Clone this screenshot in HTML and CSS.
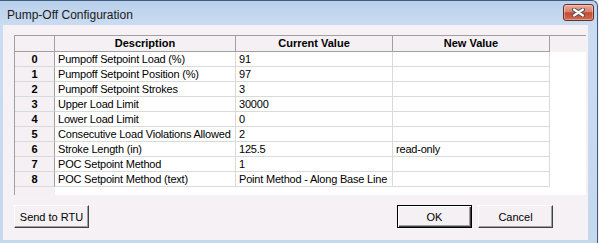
FILE: index.html
```html
<!DOCTYPE html>
<html lang="en">
<head>
    <meta charset="UTF-8">
    <title>Pump-Off Configuration</title>
    <link rel="stylesheet" href="styles.css">
</head>
<body>
    <div class="window">
        <div class="titlebar">
            <span class="title">Pump-Off Configuration</span>
            <button class="close">
                <svg width="13" height="9" viewBox="0 0 13 9">
                    <path d="M2 1.5 L11 7.5 M11 1.5 L2 7.5" stroke="#4b4b4b" stroke-width="4" stroke-linecap="round"/>
                    <path d="M2 1.5 L11 7.5 M11 1.5 L2 7.5" stroke="#fff" stroke-width="2.2" stroke-linecap="round"/>
                </svg>
            </button>
        </div>
        <div class="frame">
            <div class="client">
                <div class="grid">
                    <table>
                        <colgroup>
                            <col style="width: 40px">
                            <col style="width: 181px">
                            <col style="width: 157px">
                            <col style="width: 157px">
                            <col style="width: 36px">
                        </colgroup>
                        <thead>
                            <tr>
                                <th></th>
                                <th>Description</th>
                                <th>Current Value</th>
                                <th>New Value</th>
                                <th class="filler"></th>
                            </tr>
                        </thead>
                        <tbody>
                            <tr><td class="num">0</td><td>Pumpoff Setpoint Load (%)</td><td>91</td><td></td><td class="filler"></td></tr>
                            <tr><td class="num">1</td><td>Pumpoff Setpoint Position (%)</td><td>97</td><td></td><td class="filler"></td></tr>
                            <tr><td class="num">2</td><td>Pumpoff Setpoint Strokes</td><td>3</td><td></td><td class="filler"></td></tr>
                            <tr><td class="num">3</td><td>Upper Load Limit</td><td>30000</td><td></td><td class="filler"></td></tr>
                            <tr><td class="num">4</td><td>Lower Load Limit</td><td>0</td><td></td><td class="filler"></td></tr>
                            <tr><td class="num">5</td><td>Consecutive Load Violations Allowed</td><td>2</td><td></td><td class="filler"></td></tr>
                            <tr><td class="num">6</td><td>Stroke Length (in)</td><td>125.5</td><td>read-only</td><td class="filler"></td></tr>
                            <tr><td class="num">7</td><td>POC Setpoint Method</td><td>1</td><td></td><td class="filler"></td></tr>
                            <tr><td class="num">8</td><td>POC Setpoint Method (text)</td><td>Point Method - Along Base Line</td><td></td><td class="filler"></td></tr>
                        </tbody>
                    </table>
                </div>
                <div class="actions">
                    <button class="btn">Send to RTU</button>
                    <div class="right">
                        <button class="btn default">OK</button>
                        <button class="btn">Cancel</button>
                    </div>
                </div>
            </div>
        </div>
    </div>
</body>
</html>
```

FILE: styles.css
```css
*{
    box-sizing: border-box;
}
body{
    margin: 0;
    background-color: #f4f2f5;
    font-family: "Liberation Sans", Arial, sans-serif;
    font-size: 11px;
    color: black;
}
.window{
    width: 598px;
    height: 243px;
    display: flex;
    flex-direction: column;
    background: linear-gradient(to bottom, #b9d0eb, #cadcf1 24px, #c4d8ee);
    border-top: 1px solid #3f5b80;
    border-right: 1px solid #3f5b80;
    border-top-right-radius: 6px;
}
.titlebar{
    height: 24px;
    display: flex;
    justify-content: space-between;
    align-items: flex-start;
}
.title{
    padding: 6px 0 0 7px;
    line-height: 16px;
    font-size: 12px;
    color: #1b1b1b;
}
.close{
    width: 31px;
    height: 17px;
    margin: 3px 3px 0 0;
    padding: 0;
    display: flex;
    align-items: center;
    justify-content: center;
    border: 1px solid #6a2b22;
    border-radius: 3px;
    background: linear-gradient(to bottom, #e8ab9d, #d8826f 45%, #c24a33 52%, #cf6b50);
    box-shadow: inset 0 0 0 1px rgba(255, 255, 255, 0.35);
}
.frame{
    flex: 1;
    padding: 0 9px 3px 3px;
}
.client{
    height: 215px;
    background-color: #f5f1f5;
    padding: 10px 0 0 11px;
}
.grid{
    width: 572px;
    height: 160px;
    border-top: 1px solid #a0a0a0;
    border-left: 1px solid #a0a0a0;
    background: linear-gradient(to right, #f4f0f4 40px, white 40px);
}
table{
    width: 571px;
    table-layout: fixed;
    border-collapse: separate;
    border-spacing: 0;
    background-color: white;
}
th, td{
    height: 15px;
    padding: 0 0 0 3px;
    line-height: 14px;
    border-right: 1px solid #dadada;
    border-bottom: 1px solid #dadada;
    white-space: nowrap;
    overflow: hidden;
    letter-spacing: -0.2px;
}
th{
    height: 16px;
    padding: 0;
    line-height: 15px;
    background-color: #f4f0f4;
    border-color: #a0a0a0;
    font-weight: bold;
    text-align: center;
    letter-spacing: 0;
}
td.num{
    padding: 0;
    background-color: #f4f0f4;
    border-right-color: #a0a0a0;
    font-weight: bold;
    text-align: center;
    letter-spacing: 0;
}
th.filler, td.filler{
    border: none;
}
.actions{
    width: 539px;
    margin-top: 10px;
    display: flex;
    justify-content: space-between;
}
.right{
    display: flex;
    gap: 6px;
}
.btn{
    width: 75px;
    height: 23px;
    padding: 0;
    font-family: "Liberation Sans", Arial, sans-serif;
    font-size: 11px;
    color: black;
    background-color: #f4f0f4;
    border: 1px solid;
    border-color: white #404040 #404040 white;
    box-shadow: inset -1px -1px #a0a0a0;
}
.default{
    border-color: black;
    box-shadow: inset 1px 1px white, inset -1px -1px #404040, inset -2px -2px #a0a0a0;
}
```
